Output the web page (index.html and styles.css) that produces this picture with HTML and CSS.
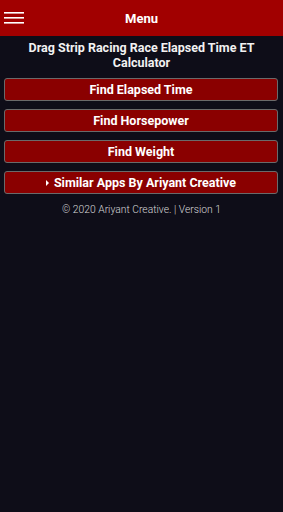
FILE: index.html
```html
<!DOCTYPE html>
<html>
<head>
<meta charset="utf-8">
<link rel="stylesheet" href="styles.css">
</head>
<body>
<header class="topbar">
  <svg class="burger" width="20" height="12" viewBox="0 0 20 12"><rect x="0" y="0" width="20" height="1.6" fill="#fff"/><rect x="0" y="5" width="20" height="1.6" fill="#fff"/><rect x="0" y="10" width="20" height="1.6" fill="#fff"/></svg>
  <div class="title">Menu</div>
</header>
<main class="content">
  <h1 class="apptitle">Drag Strip Racing Race Elapsed Time ET Calculator</h1>
  <div class="btn">Find Elapsed Time</div>
  <div class="btn">Find Horsepower</div>
  <div class="btn">Find Weight</div>
  <div class="btn"><span class="tri"></span>Similar Apps By Ariyant Creative</div>
  <p class="footer">© 2020 Ariyant Creative. | Version 1</p>
</main>
</body>
</html>
```
FILE: styles.css
```css
html, body { margin: 0; padding: 0; }
body {
  background: #0e0d18;
  font-family: Roboto, "Liberation Sans", sans-serif;
  color: #fff;
  width: 283px;
  min-height: 512px;
}
.topbar {
  height: 36px;
  background: #a10000;
  position: relative;
  display: flex;
  align-items: center;
  justify-content: center;
}
.burger { position: absolute; left: 4px; top: 12px; }
.title { font-weight: 700; font-size: 13px; }
.content { padding: 4px 4px 0 4px; display: flex; flex-direction: column; }
.apptitle {
  margin: 0 0 8px 0;
  font-size: 12.5px;
  font-weight: 700;
  text-align: center;
  line-height: 15px;
  color: #f2f2f2;
}
.btn {
  height: 21px;
  background: #8a0000;
  border: 1px solid #6a6a6a;
  border-radius: 3px;
  margin: 0 1px 8px 0;
  display: flex;
  align-items: center;
  justify-content: center;
  font-weight: 700;
  font-size: 12.5px;
}
.tri {
  width: 0; height: 0;
  border-left: 3.5px solid #fff;
  border-top: 3.5px solid transparent;
  border-bottom: 3.5px solid transparent;
  margin-right: 5px;
}
.footer {
  margin: 1px 0 0 0;
  text-align: center;
  font-size: 10.3px;
  font-weight: 300;
  color: #d8d8d8;
}
```
